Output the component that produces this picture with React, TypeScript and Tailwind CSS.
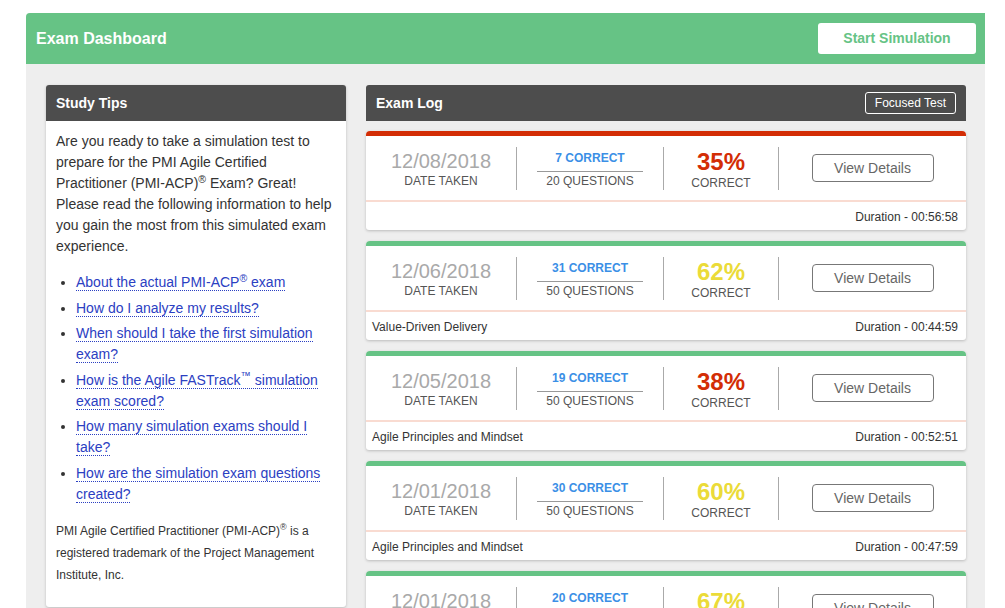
import { ReactNode } from "react"

type Exam = {
    date: string
    correct: number
    questions: number
    pct: number
    domain: string
    duration: string
    flagged?: boolean
}

const exams: Exam[] = [
    { date: "12/08/2018", correct: 7, questions: 20, pct: 35, domain: "", duration: "00:56:58", flagged: true },
    { date: "12/06/2018", correct: 31, questions: 50, pct: 62, domain: "Value-Driven Delivery", duration: "00:44:59" },
    { date: "12/05/2018", correct: 19, questions: 50, pct: 38, domain: "Agile Principles and Mindset", duration: "00:52:51" },
    { date: "12/01/2018", correct: 30, questions: 50, pct: 60, domain: "Agile Principles and Mindset", duration: "00:47:59" },
    { date: "12/01/2018", correct: 20, questions: 30, pct: 67, domain: "Agile Principles and Mindset", duration: "00:41:12" },
]

const tips: ReactNode[] = [
    <>About the actual PMI-ACP<sup>®</sup> exam</>,
    <>How do I analyze my results?</>,
    <>When should I take the first simulation exam?</>,
    <>How is the Agile FASTrack<sup>™</sup> simulation exam scored?</>,
    <>How many simulation exams should I take?</>,
    <>How are the simulation exam questions created?</>,
]

const ExamCard = ({ exam }: { exam: Exam }) => {
    const passed = exam.pct >= 50
    return (
        <div className="bg-white rounded-t-[4px] rounded-b-[3px] shadow-[0_1px_3px_rgba(0,0,0,0.22)] overflow-hidden">
            <div className={`h-[5px] ${exam.flagged ? "bg-[#d32d05]" : "bg-[#66c385]"}`} />
            <div className="flex items-center h-[64px]">
                <div className="w-[150px] flex flex-col items-center pt-[2px]">
                    <span className="text-[20px] leading-[22px] text-[#a9a9a9]">{exam.date}</span>
                    <span className="text-[12px] leading-[15px] text-[#555] mt-[2px]">DATE TAKEN</span>
                </div>
                <div className="w-px h-[43px] bg-[#aaa]" />
                <div className="w-[146px] flex flex-col items-center pt-[4px]">
                    <span className="text-[12px] leading-[15px] font-bold text-[#3b8fe6] pb-[5px] w-[106px] text-center border-b border-[#999]">
                        {exam.correct} CORRECT
                    </span>
                    <span className="text-[12px] leading-[15px] text-[#555] mt-[2px]">{exam.questions} QUESTIONS</span>
                </div>
                <div className="w-px h-[43px] bg-[#aaa]" />
                <div className="w-[114px] flex flex-col items-center pt-[2px]">
                    <span className={`text-[24px] leading-[26px] font-bold ${passed ? "text-[#ebdb38]" : "text-[#d32d05]"}`}>
                        {exam.pct}%
                    </span>
                    <span className="text-[12px] leading-[14px] text-[#555] mt-[1px]">CORRECT</span>
                </div>
                <div className="w-px h-[43px] bg-[#aaa]" />
                <div className="flex-1 flex justify-center">
                    <button className="w-[122px] h-[28px] border border-[#777] rounded-[4px] text-[14px] text-[#666] bg-white">
                        View Details
                    </button>
                </div>
            </div>
            <div className="h-[2px] bg-[#f9dbd1]" />
            <div className="flex justify-between items-center h-[28px] pl-[6px] pr-[8px] pt-[1px] text-[12px] text-[#333]">
                <span>{exam.domain}</span>
                <span>Duration - {exam.duration}</span>
            </div>
        </div>
    )
}

const App = () => {
    return (
        <div className="h-[608px] overflow-hidden bg-white font-['Liberation_Sans',Arial,sans-serif] pt-[13px]">
            <div className="ml-[26px] w-[959px] min-h-[700px] bg-[#eeeeee] rounded-tl-[4px]">
                <div className="h-[51px] bg-[#66c385] rounded-tl-[4px] flex items-center justify-between pl-[10px] pr-[9px]">
                    <h1 className="text-[16px] font-bold text-white">Exam Dashboard</h1>
                    <button className="w-[158px] h-[31px] bg-white rounded-[3px] text-[14px] font-bold text-[#66c385]">
                        Start Simulation
                    </button>
                </div>

                <div className="flex gap-[20px] pl-[20px] pt-[21px]">
                    <div className="w-[300px] self-start bg-white rounded-[3px] shadow-[0_1px_3px_rgba(0,0,0,0.22)]">
                        <div className="h-[36px] bg-[#4d4d4d] rounded-t-[3px] flex items-center px-[10px]">
                            <h2 className="text-[14px] font-bold text-white">Study Tips</h2>
                        </div>
                        <div className="px-[10px] pt-[10px] pb-[21px] text-[14px] leading-[21px] text-[#333]">
                            <p>
                                Are you ready to take a simulation test to prepare for the PMI Agile Certified Practitioner
                                (PMI-ACP)<sup>®</sup> Exam? Great! Please read the following information to help you gain the
                                most from this simulated exam experience.
                            </p>
                            <ul className="list-disc pl-[20px] mt-[15px] space-y-[4.5px]">
                                {tips.map((t, i) => (
                                    <li key={i}>
                                        <a className="text-[#2b40c2] border-b border-dotted border-[#2b40c2]">{t}</a>
                                    </li>
                                ))}
                            </ul>
                            <p className="mt-[15px] text-[12px] leading-[22px]">
                                PMI Agile Certified Practitioner (PMI-ACP)<sup>®</sup> is a registered trademark of the Project
                                Management Institute, Inc.
                            </p>
                        </div>
                    </div>

                    <div className="w-[600px]">
                        <div className="h-[36px] bg-[#4d4d4d] rounded-t-[3px] flex items-center justify-between pl-[10px] pr-[10px]">
                            <h2 className="text-[14px] font-bold text-white">Exam Log</h2>
                            <span className="h-[22px] px-[9px] flex items-center border border-white rounded-[3px] text-[12px] text-white">
                                Focused Test
                            </span>
                        </div>
                        <div className="flex flex-col gap-[11px] mt-[10px]">
                            {exams.map((e, i) => (
                                <ExamCard key={i} exam={e} />
                            ))}
                        </div>
                    </div>
                </div>
            </div>
        </div>
    )
}

export default App
